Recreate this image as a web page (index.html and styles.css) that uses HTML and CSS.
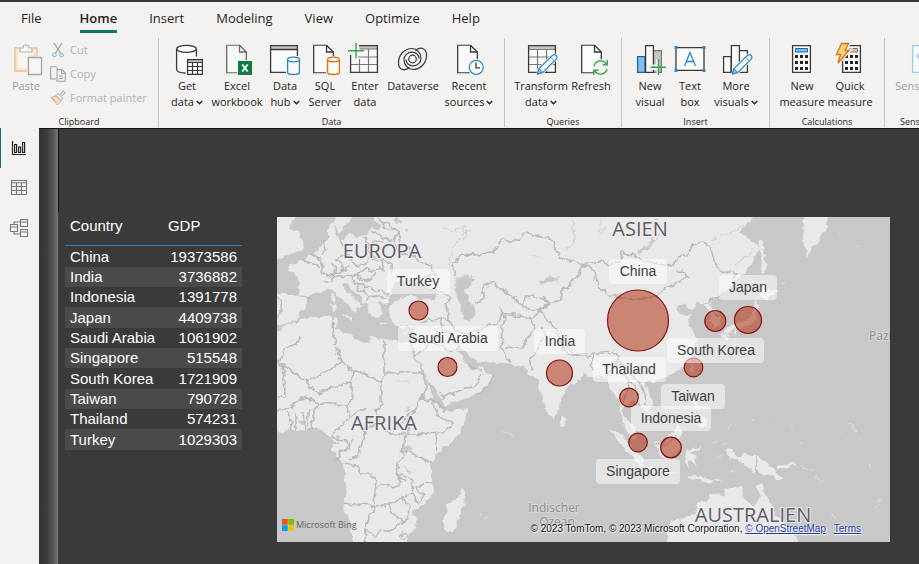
FILE: index.html
```html
<!DOCTYPE html>
<html lang="en">
<head>
<meta charset="utf-8">
<title>Report</title>
<meta name="viewport" content="width=device-width, initial-scale=1">
<link rel="stylesheet" href="styles.css">
</head>
<body>
<svg class="defs" aria-hidden="true">
  <symbol id="chev" viewBox="0 0 7 5"><path d="M.7 1 3.5 3.7 6.3 1" fill="none" stroke="#252423" stroke-width="1.4"/></symbol>
  <symbol id="doc" viewBox="0 0 21 29"><path d="M.7.7H13.500L20.300 7.500V28.300H.7Z" fill="#fafafa" stroke="#3b3a39" stroke-width="1.3"/><path d="M13.500.7V7.500H20.300" fill="none" stroke="#3b3a39" stroke-width="1.3"/></symbol>
  <symbol id="pencil" viewBox="0 0 22 22"><path d="M1 21 2.500 15.500 16.500 1.800Q18.300.4 20 2T20.300 5.500L6.500 19.300Z" fill="#fafafa" stroke="#f3f2f1" stroke-width="3"/><path d="M1 21 2.500 15.500 16.500 1.800Q18.300.4 20 2T20.300 5.500L6.500 19.300Z" fill="#fafafa" stroke="#2b88c8" stroke-width="1.2"/><path d="M1 21 2.500 15.500 6.500 19.300Z" fill="#83beec" stroke="#2b88c8"/><path d="m14.500 3.800 3.800 3.800" stroke="#2b88c8"/></symbol>
</svg>

<header>
  <nav class="tabs" aria-label="Ribbon tabs">
    <a href="#">File</a><a href="#" class="current" aria-current="page">Home</a><a href="#">Insert</a><a href="#">Modeling</a><a href="#">View</a><a href="#">Optimize</a><a href="#">Help</a>
  </nav>
  <div class="ribbon">
    <section class="group clipboard">
      <div class="tools">
        <button class="tool w-36 off" disabled>
          <svg class="ico" viewBox="0 0 34 34"><path d="M10 6H6V29H18M24 6H28V14" fill="none" stroke="#edc08e" stroke-width="1.400"/><path d="M8 8H26V14H19V27H8Z" fill="#f7f6f5" stroke="#f8e3bd" stroke-width="1.500"/><path d="M11 10V6H14Q14 3 17 3T20 6H23V10Z" fill="#f7f6f5" stroke="#b5b3b1" stroke-width="1.200"/><path d="M19.500 15.500H32.500V32.500H19.500Z" fill="#f7f6f5" stroke="#a5a3a1" stroke-width="1.300"/></svg>
          <span>Paste</span>
        </button>
        <div class="stack">
          <button class="row off" disabled><svg viewBox="0 0 16 16"><path d="M4 1 10.500 11M12 1 5.500 11" fill="none" stroke="#a3a1a0" stroke-width="1.300"/><circle cx="4.500" cy="13" r="1.900" fill="#d5e9f5" stroke="#88b9dc"/><circle cx="11.500" cy="13" r="1.900" fill="#d5e9f5" stroke="#88b9dc"/></svg>Cut</button>
          <button class="row off" disabled><svg viewBox="0 0 16 16"><path d="M6 13H.7V.7H6L8 3M7 3.500H12L15.300 7V15.300H7ZM11.500 3.500V7.500H15.300M9 10H13M9 12.500H13" fill="none" stroke="#a3a1a0" stroke-width="1.100"/></svg>Copy</button>
          <button class="row off" disabled><svg viewBox="0 0 16 16"><path d="M1 7.500 6 6 11 10.500 7.500 15Z" fill="#f9dfc6" stroke="#e0ad82"/><path d="M1.500 7.500 7 12" stroke="#e0ad82"/><path d="M6 5.500 8 3.500 10 5.500 13 .8 15.300 3 11 6.500 12.800 8.500 11 10.500Z" fill="#f7f6f5" stroke="#a3a1a0"/></svg>Format painter</button>
        </div>
      </div>
      <h2>Clipboard</h2>
    </section>

    <section class="group data">
      <div class="tools">
        <button class="tool w-44">
          <svg class="ico" viewBox="0 0 34 34"><path d="M6.600 7V27.500Q7 31 16 31V16H26.400V7" fill="#fafafa"/><ellipse cx="16.500" cy="6.800" rx="9.900" ry="3.500" fill="#fafafa" stroke="#3b3a39" stroke-width="1.300"/><path d="M6.600 7V27.500Q7 30.800 15.500 31M26.400 7V14.500" fill="none" stroke="#3b3a39" stroke-width="1.300"/><path d="M17.600 17.600H32.400V32.400H17.600Z" fill="#fafafa"/><path d="M17.600 17.600H32.400V20.500H17.600Z" fill="#c8c6c4"/><path d="M17.600 20.500H32.400M17.600 24.500H32.400M17.600 28.500H32.400M22.500 20.500V32.400M27.500 20.500V32.400M17.600 17.600H32.400V32.400H17.600Z" fill="none" stroke="#3b3a39" stroke-width="1.200"/></svg>
          <span>Get<br>data<svg class="chev"><use href="#chev"/></svg></span>
        </button>
        <button class="tool w-56">
          <svg class="ico" viewBox="0 0 34 34"><use href="#doc" x="6" y="2.500" width="21" height="29" opacity=".75"/><path d="M17 18H33V34H17Z" fill="#f3f2f1"/><path d="M18 19H32V33H18Z" fill="#107c41"/><path d="m22.300 22.500 5.400 7M27.700 22.500 22.300 29.500" stroke="#fff" stroke-width="1.900"/></svg>
          <span>Excel<br>workbook</span>
        </button>
        <button class="tool w-40">
          <svg class="ico" viewBox="0 0 34 34"><path d="M2.600 3.600H29.400V30.400H2.600Z" fill="#fafafa"/><path d="M2.600 3.600H29.400V7.500H2.600Z" fill="#c8c6c4"/><path d="M2.600 7.500H29.400M2.600 3.600H29.400V30.400H2.600Z" fill="none" stroke="#3b3a39" stroke-width="1.300"/><path d="M18 14H33V34H18Z" fill="#f3f2f1"/><path d="M19.600 17.500V30.500Q20 32.500 25.500 32.500T31.400 30.500V17.500" fill="#fafafa" stroke="#2b88c8" stroke-width="1.300"/><ellipse cx="25.500" cy="17.500" rx="5.900" ry="2.300" fill="#fafafa" stroke="#2b88c8" stroke-width="1.300"/></svg>
          <span>Data<br>hub<svg class="chev"><use href="#chev"/></svg></span>
        </button>
        <button class="tool w-40">
          <svg class="ico" viewBox="0 0 34 34"><use href="#doc" x="5" y="2.500" width="21" height="29"/><path d="M18 14H33V34H18Z" fill="#f3f2f1"/><path d="M19.600 17.500V30.500Q20 32.500 25.500 32.500T31.400 30.500V17.500" fill="#fafafa" stroke="#d9710f" stroke-width="1.300"/><ellipse cx="25.500" cy="17.500" rx="5.900" ry="2.300" fill="#fafafa" stroke="#d9710f" stroke-width="1.300"/></svg>
          <span>SQL<br>Server</span>
        </button>
        <button class="tool w-40">
          <svg class="ico" viewBox="0 0 34 34"><path d="M2.600 3.600H29.400V30.400H2.600Z" fill="#fafafa"/><path d="M11 3.600H29.400V7H11Z" fill="#c8c6c4"/><path d="M12 7H29.400M10 15H29.400M2.600 22.500H29.400M11.500 17V30.400M20.500 7V30.400" fill="none" stroke="#797775" stroke-width="1.200"/><path d="M11 3.600H29.400V30.400H2.600V13" fill="none" stroke="#3b3a39" stroke-width="1.300"/><path d="M0 1H10V12H0Z" fill="#f3f2f1"/><path d="M8 1V16.500M0 8.700H16" stroke="#35a352" stroke-width="1.400"/></svg>
          <span>Enter<br>data</span>
        </button>
        <button class="tool w-56">
          <svg class="ico" viewBox="0 0 34 34" fill="none" stroke="#3b3a39" stroke-width="1.200"><path id="swirl" d="M13.500 25.500C8 30 2 27.500 2.500 20 3 12 9 6.500 16 6.500 21 6.500 25 11 25 16.500 25 20.500 21.500 23.800 17 23.800 13 23.800 10 21 10 17.500"/><use href="#swirl" transform="rotate(180 16.500 17)"/><circle cx="16.500" cy="17" r="3.800"/></svg>
          <span>Dataverse</span>
        </button>
        <button class="tool w-56">
          <svg class="ico" viewBox="0 0 34 34"><use href="#doc" x="5" y="2.500" width="21" height="29"/><circle cx="24.300" cy="25.300" r="8.500" fill="#f3f2f1"/><circle cx="24.300" cy="25.300" r="7" fill="#fafafa" stroke="#2b88c8" stroke-width="1.300"/><path d="M24 20.500V25.800H28" fill="none" stroke="#3b3a39" stroke-width="1.300"/></svg>
          <span>Recent<br>sources<svg class="chev"><use href="#chev"/></svg></span>
        </button>
      </div>
      <h2>Data</h2>
    </section>

    <section class="group queries">
      <div class="tools">
        <button class="tool w-56">
          <svg class="ico" viewBox="0 0 34 34"><path d="M4.600 3.600H31.400V30.400H4.600Z" fill="#fafafa"/><path d="M4.600 3.600H31.400V7H4.600Z" fill="#c8c6c4"/><path d="M4.600 7.500H31.400M4.600 15H31.400M4.600 22.500H31.400M13.500 7.500V30.400M22.500 7.500V30.400" stroke="#797775" stroke-width="1.200"/><path d="M4.600 3.600H31.400V30.400H4.600Z" fill="none" stroke="#3b3a39" stroke-width="1.300"/><use href="#pencil" x="12.500" y="11.500" width="21.500" height="21.500"/></svg>
          <span>Transform<br>data<svg class="chev"><use href="#chev"/></svg></span>
        </button>
        <button class="tool w-44">
          <svg class="ico" viewBox="0 0 34 34"><use href="#doc" x="7" y="2.500" width="21" height="29"/><circle cx="26.500" cy="25.500" r="8.300" fill="#f3f2f1"/><path d="M20 24A6.800 6.800 0 0 1 32.500 22.300M33.300 18V22.800H28.600M33 27A6.800 6.800 0 0 1 20.500 28.700M19.700 33V28.200H24.400" fill="none" stroke="#35a352" stroke-width="1.400"/></svg>
          <span>Refresh</span>
        </button>
      </div>
      <h2>Queries</h2>
    </section>

    <section class="group insert">
      <div class="tools">
        <button class="tool w-44">
          <svg class="ico" viewBox="0 0 34 34"><path d="M20.500 8.600H28.400V30.400H20.500Z" fill="#c8c6c4" stroke="#797775" stroke-width="1.200"/><path d="M4.600 14.600H12V30.400H4.600Z" fill="#83beec" stroke="#1067b0" stroke-width="1.300"/><path d="M12.600 3.600H20.400V30.400H12.600Z" fill="#fafafa" stroke="#3b3a39" stroke-width="1.300"/><path d="M17 23.500H24V17M24.500 33V27H17" stroke="#f3f2f1" stroke-width="2" fill="none"/><path d="M25.500 17V33M17.500 25.300H33" stroke="#35a352" stroke-width="1.400"/></svg>
          <span>New<br>visual</span>
        </button>
        <button class="tool w-36">
          <svg class="ico" viewBox="0 0 34 34"><path d="M3 5.600H31V28.400H3Z" fill="#fafafa" stroke="#3b3a39" stroke-width="1.300"/><path d="M1.500 4H4.500V7H1.500ZM29.500 4H32.500V7H29.500ZM1.500 27H4.500V30H1.500ZM29.500 27H32.500V30H29.500Z" fill="#2b88d8"/><path d="M11.500 24 17 10.500 22.500 24M13.500 19.500H20.500" fill="none" stroke="#2b88d8" stroke-width="1.300"/></svg>
          <span>Text<br>box</span>
        </button>
        <button class="tool w-56">
          <svg class="ico" viewBox="0 0 34 34"><path d="M4.600 14.600H12V30.400H4.600ZM20.400 8.600H28.400V30.400H20.400ZM12.400 3.600H20.400V30.400H12.400Z" fill="#fafafa" stroke="#3b3a39" stroke-width="1.300"/><use href="#pencil" x="12.500" y="11.500" width="21.500" height="21.500"/></svg>
          <span>More<br>visuals<svg class="chev"><use href="#chev"/></svg></span>
        </button>
      </div>
      <h2>Insert</h2>
    </section>

    <section class="group calc">
      <div class="tools">
        <button class="tool w-48">
          <svg class="ico" viewBox="0 0 34 34"><path d="M7.600 3.600H25.400V30.400H7.600Z" fill="#fafafa" stroke="#3b3a39" stroke-width="1.300"/><path d="M10.500 6.500H22.500V10H10.500Z" fill="#83beec" stroke="#1067b0"/><path d="M10 14.500H23M10 20.500H23M10 26.500H23" stroke="#252423" stroke-width="3" stroke-dasharray="3 2"/></svg>
          <span>New<br>measure</span>
        </button>
        <button class="tool w-48">
          <svg class="ico" viewBox="0 0 34 34"><path d="M9.600 3.600H27.400V30.400H9.600Z" fill="#fafafa" stroke="#3b3a39" stroke-width="1.300"/><path d="M16 6.500H24.500V10H15Z" fill="#c8c6c4" stroke="#797775"/><path d="M12 14.500H25M12 20.500H25M12 26.500H25" stroke="#252423" stroke-width="3" stroke-dasharray="3 2"/><path d="M8.500 1.500H15.500L12 8.500H16L5 21 7.500 12.500H3.500Z" fill="#fcd67e" stroke="#f3f2f1" stroke-width="4"/><path d="M8.500 1.500H15.500L12 8.500H16L5 21 7.500 12.500H3.500Z" fill="#fcd67e" stroke="#d9710f" stroke-width="1.300"/></svg>
          <span>Quick<br>measure</span>
        </button>
      </div>
      <h2>Calculations</h2>
    </section>

    <section class="group sens">
      <div class="tools">
        <button class="tool w-56 off" disabled>
          <svg class="ico" viewBox="0 0 34 34"><path d="M8.600 3.600H28V30.400H8.600Z" fill="#f7fafc" stroke="#a0cbe5" stroke-width="1.300"/><path d="m18 9-5 5 5 5M18 12v4" fill="none" stroke="#a0cbe5" stroke-width="1.300"/></svg>
          <span>Sensitivity<br><svg class="chev"><use href="#chev"/></svg></span>
        </button>
      </div>
      <h2>Sensitivity</h2>
    </section>
  </div>
</header>

<div class="work">
  <aside aria-label="Views">
    <button class="view active" aria-label="Report view"><svg viewBox="0 0 20 20" fill="none" stroke="#252423" stroke-width="1.200"><path d="M3.500 3V16.500H17M5.600 6.500H7.600V14.500H5.600ZM9.600 9H11.600V14.500H9.600ZM13.600 4.500H15.600V14.500H13.600Z"/></svg></button>
    <button class="view" aria-label="Data view"><svg viewBox="0 0 20 20" fill="none" stroke="#797775" stroke-width="1.100"><path d="M2.500 2.500H17.500V16.500H2.500ZM2.500 4.700H17.500M2.500 8.500H17.500M2.500 12.500H17.500M7.500 4.700V16.500M12.500 4.700V16.500"/></svg></button>
    <button class="view" aria-label="Model view"><svg viewBox="0 0 20 20" fill="none" stroke="#797775" stroke-width="1.100"><path d="M1.500 6.500H8.500V13.500H1.500ZM1.500 9H8.500M11.500 1.500H18.500V8.500H11.500ZM11.500 4H18.500M11.500 11.500H18.500V18.500H11.500ZM11.500 14H18.500M5 6.500V4H11.500M5 13.500V16H11.500"/></svg></button>
  </aside>
  <main>
    <table>
      <thead><tr><th>Country</th><th>GDP</th></tr></thead>
      <tbody>
        <tr><td>China</td><td>19373586</td></tr>
        <tr><td>India</td><td>3736882</td></tr>
        <tr><td>Indonesia</td><td>1391778</td></tr>
        <tr><td>Japan</td><td>4409738</td></tr>
        <tr><td>Saudi Arabia</td><td>1061902</td></tr>
        <tr><td>Singapore</td><td>515548</td></tr>
        <tr><td>South Korea</td><td>1721909</td></tr>
        <tr><td>Taiwan</td><td>790728</td></tr>
        <tr><td>Thailand</td><td>574231</td></tr>
        <tr><td>Turkey</td><td>1029303</td></tr>
      </tbody>
    </table>
    <figure class="map">
      <svg viewBox="277 217 613 325" role="img" aria-label="Map of GDP by country">
        <!-- Roughens coastlines and borders together so that they stay aligned -->
        <filter id="rough" filterUnits="userSpaceOnUse" x="267" y="207" width="633" height="345">
          <feTurbulence type="fractalNoise" baseFrequency=".13" numOctaves="3" seed="4"/>
          <feDisplacementMap in="SourceGraphic" scale="7" xChannelSelector="R" yChannelSelector="G"/>
        </filter>
        <g filter="url(#rough)">
        <g class="land">
          <path d="M267 207H296L294 217 291 224 289 229 297 231 300 237 304 241 303 247 298 252 290 254 284 257 267 260Z"/>
          <path d="M333 207H353L353 217 350 223 345 225 344 230 339 233 335 226Z"/>
          <path d="M267 294 284 293 292 295 299 294 300 286 298 277 294 272 288 269 290 264 298 265 299 259 306 260 310 255 317 252 321 247 325 240 328 238 328 231 330 224 334 222 335 231 337 237 343 239 350 235 358 237 366 236 369 231 372 226 378 230 380 224 373 220 378 207H753L753 217 749 223 742 229 738 235 746 235 750 240 756 243 758 249 755 257 752 264 746 272 738 280 733 283 728 289 720 293 714 298 709 304 715 309 721 316 721 325 714 328 712 321 708 311 704 305 698 302 694 308 688 308 684 303 677 308 683 315 692 314 688 320 693 330 696 340 696 350 690 360 681 368 670 375 660 378 655 383 649 380 643 385 649 393 653 401 652 408 646 413 643 409 639 402 633 401 629 408 624 406 622 413 628 420 633 427 637 438 632 437 626 430 622 420 620 410 618 400 612 392 608 381 601 376 594 378 585 374 580 379 574 384 566 388 562 396 560 405 558 414 553 420 548 413 544 403 541 393 538 380 534 378 527 374 528 369 520 366 510 364 498 363 489 362 483 363 476 360 470 357 465 350 459 345 456 348 461 354 464 361 468 367 475 370 482 366 486 373 493 375 488 384 482 391 470 397 456 402 444 407 441 400 436 390 430 382 423 370 415 354 412 348 416 340 414 330 408 327 400 328 393 322 389 313 391 306 397 301 404 297 413 296 425 300 436 299 438 294 428 286 420 284 411 285 402 280 394 286 390 294 391 301 385 304 377 302 379 308 382 314 378 318 372 316 369 309 364 303 358 296 351 289 346 283 341 284 345 290 352 296 360 302 363 307 358 307 355 315 352 308 345 303 338 297 334 290 327 289 321 293 313 293 307 299 306 305 301 311 298 318 292 322 285 324 267 321Z"/>
          <path d="M267 335 283 328 286 325 294 323 302 320 312 317 324 317 336 316 338 320 336 327 341 332 351 336 360 341 367 344 371 337 383 338 394 341 403 342 411 342 411 350 415 360 420 370 427 381 431 393 438 405 442 412 453 412 467 409 467 417 462 428 457 437 446 446 437 453 431 463 431 474 434 485 433 495 426 502 417 508 412 514 417 521 416 528 408 533V552H353V542L350 525 346 512 342 503 347 492 345 479 343 465 337 456 332 449 334 438 325 433 318 426 308 429 298 431 290 429 283 433 267 431Z"/>
          <path d="m463 489 2 9-4 12-5 17-4 5h-6l-3-11 4-10v-7l8-4Z"/>
          <path d="m562 416 4 5-1 5-4 1-1-5ZM805 207H828L828 217 827 228 822 233 819 240 812 247 808 258 804 248 803 236ZM760 238 763 243 764 255 767 264 764 274 761 270 762 257 758 247ZM762 283 770 289 779 291 773 295 765 300 760 295ZM757 299 760 307 757 317 750 325 741 328 732 329 727 334 724 331 735 324 747 320 754 311ZM724 333 728 335 726 342 722 338ZM733 331 738 330 736 334ZM691 365 694 362 693 374 689 371Z"/>
          <path d="M655 442 662 443 670 434 678 426 684 431 680 438 681 447 676 454 671 459 659 454ZM610 428 618 433 627 441 638 453 644 460 643 466 635 461 622 445ZM646 467 658 469 669 471 680 475 666 474 650 471ZM687 449 700 447 700 450 690 452 697 457 693 459 698 468 693 464 690 459 689 468 686 464ZM687 476 699 476 711 480 724 481 708 483 690 479ZM726 449 733 450 733 454 738 458 745 453 758 457 768 463 772 469 778 474 785 479 777 479 768 474 760 475 751 472 747 466 741 461 731 459 727 454ZM778 466 790 464 792 461 794 465 786 468 778 468ZM691 397 698 403 699 412 694 407ZM696 415 704 417 707 425 701 427 695 422 691 428ZM648 413 653 415 648 417Z"/>
          <path d="M670 552 667 531 670 523 678 519 689 517 696 510 698 503 707 501 710 494 718 493 723 497 725 490 731 487 740 487 742 495 747 502 755 506 759 498 758 487 761 482 765 495 771 502 775 515 784 522 791 528 797 542V552Z"/>
          <path d="m332 294 3 1-1 6-3-2ZM331 303l5 1-1 8-3-1ZM343 315l9 1-1 4-6-2ZM379 323l7 1v1h-6ZM402 332l6-2-3 4Z"/>
          <path class="specks" d="M838 234h2M857 245h2M785 281l-3 3M778 283l-4 2M838 383h1M845 398h1M753 420h1M773 419h1M791 427h1M851 423l5 8M728 428l3-5M800 442h1M860 440h2M846 439h1M800 466l12 6M815 476l8 6M869 464l4 5M875 508l4-5M873 502l9-2M831 514l6 5M502 430l12 8M480 515h2M488 452l1 1M722 446l5-2M712 443l5-1M714 457h10M730 472l5-2M484 518l2-2"/>
        </g>
        <g class="water">
          <path d="M457 278 466 275 474 279 470 287 465 292 468 300 474 305 476 314 470 322 463 318 461 308 458 298 454 286Z"/>
          <path d="M637 253 646 247 652 238 655 240 649 249 640 254ZM402 447 411 445 413 450 406 453ZM403 466l6 4 2 4-5-3ZM363 450l-3 5 1-5ZM411 411l-6 1 3-6ZM541 280l8-3 10 1-8 3-11 3ZM489 217l-5 1M298 420l2 5 6-1-2-5Z"/>
          <path d="M343 284 347 284 355 292 363 299 360 300 352 294ZM393 221l5-3 4 3-5 3ZM404 229h5l-2 3Z"/>
          <path class="rivers" d="m454 231 12-5-4 7 8-3-10 10-7 7-4 20m-6-40 9 5M573 220l2 18-8 14M597 232l8-4-6 9M644 225l15-6M744 225l-8 6-15 4M752 249l-10 12-5 4M660 233l-6 8-10 7M712 236l6 3M709 241l8-3M530 257h10M398 380l12 2M601 218v7M493 282l-6 6M560 277l-6 4 5 3M447 429l5 2"/>
        </g>
        <g class="borders">
          <path d="M302 259 311 264 323 266 321 272 326 277 334 274 336 267 332 263M311 253 319 259 323 266M328 238 324 241 326 250 321 255M340 238 345 250 349 260 356 265 363 266 370 256 369 246 365 237M334 274 344 270 350 266M324 282 331 280 333 276M330 278 342 275 351 277 358 273 367 268 375 271 383 269 382 261 370 259M344 270 341 264 337 259 345 256M351 277 354 284 359 283 365 286 364 292 369 295 366 302M359 283 357 290 364 292M365 286 374 290 389 294M369 295 378 298 387 298M358 273 361 279 369 281 376 273M372 231 382 238 394 240 398 233 390 224 382 222M372 241 383 242M394 240 395 248 402 254 414 255 420 262 431 266 435 275 424 276M370 256 380 258 392 263 392 275M378 217 385 228 398 231 402 244 418 251M277 297 283 302 279 317M299 295 311 299M420 323 430 320 441 319 449 321 449 313 445 304 452 297 442 292 430 290M449 321 455 331 469 335 482 328 496 324 504 313 518 316 532 318M437 331 432 342 415 356M432 342 452 351 459 347M441 319 444 330 455 342"/>
          <path d="M455 276 452 265 462 254 477 255 492 252 503 240 518 240 525 233 533 236 548 238 556 247 563 260 574 261 584 266 592 263 604 261 608 266 620 262 621 252 638 257 645 262 660 264 673 265 678 258 688 254 693 244 704 242 710 247 714 261 721 271 736 273 733 281"/>
          <path d="M584 266 577 277 571 284 561 291 561 301 548 304 540 310 548 322 558 328M584 266 594 270 596 283 606 294 614 296 626 299 641 299 656 296 666 288 676 283 688 277 683 270 676 271M483 299 483 285 493 282 506 292 516 300 530 310 544 309 549 303 541 296 526 298 523 308M483 299 475 303M500 307 505 316 502 334 501 348 510 363M505 347 522 348 528 338 534 330 532 319 540 311M540 327 545 334 539 347 529 359 533 371M558 328 560 343 568 354 586 358 592 353 604 353 613 351 618 359 611 373M566 345 576 355 587 354M592 355 593 371M604 380 612 368 618 357 621 373 629 380 637 389 638 397M629 380 626 394 622 405M618 359 629 373 642 370 650 373M629 373 638 380 645 395 646 404M704 305 714 297 722 294M714 313 721 317M757 456 757 475M655 445 666 444 676 435M494 375 486 389 478 394M468 365 481 370M443 397 460 390 476 386 482 372M440 392 443 399"/>
          <path d="M333 317 334 337 340 362 336 367 306 382 277 360M300 336 299 342 284 350 281 361M283 362 285 396 277 396M306 382 318 393 351 382 353 370 340 362M353 370 381 382M384 339 384 375M384 373 424 373M384 375 381 382 381 403 376 411 380 422 389 434 407 434M351 382 353 398 348 405 317 403 313 416 312 429M348 405 350 417 340 425 332 437M294 402 306 398 318 402M277 411 291 409 294 402M303 412 304 430M296 413 296 430M308 410 308 426M286 413 293 422 290 431M423 373 427 384 422 398 415 411 406 416 401 425M415 411 408 421 408 433 428 434 443 433 453 423 438 416 433 400M422 399 434 400 443 410M380 422 365 430 363 440 359 453 350 461M407 434 403 444 402 457 398 465 399 477 405 483M437 435 435 451M404 451 421 457 432 463M352 417 357 410 366 410M332 437 346 440 349 448 341 452 335 460M343 464 357 466 361 473 372 473 376 480 375 491 382 484 393 487 401 483 397 475 406 477 414 480 411 493 418 503 424 496 416 486 434 481M342 503 356 505 375 506 388 506 400 498 411 495M375 506 374 512 368 516 367 531 374 536 382 530 389 532 397 525 408 520 410 507 402 498M388 506 394 515 403 521M367 531 364 542M375 491 373 504M402 533l4 1 1 3-4 2-3-3ZM332 442H339M353 438 347 448"/>
        </g>
        </g>
        <g class="places">
          <text x="382" y="258">EUROPA</text>
          <text x="640" y="236">ASIEN</text>
          <text x="384" y="430">AFRIKA</text>
          <text x="753" y="522">AUSTRALIEN</text>
        </g>
        <g class="seas">
          <text x="554" y="512">Indischer</text>
          <text x="557" y="526">Ozean</text>
          <text x="887" y="340">Pazifik</text>
        </g>
        <g class="bubbles">
          <circle cx="418.500" cy="310.500" r="9.500"/><circle cx="447.500" cy="367" r="9.500"/><circle cx="559.500" cy="373" r="13"/><circle cx="638" cy="320.500" r="30.500"/><circle cx="715.300" cy="321" r="10.500"/><circle cx="748" cy="320" r="13.500"/><circle cx="693.500" cy="367.500" r="9.300"/><circle cx="629" cy="397.500" r="9.300"/><circle cx="638" cy="442.500" r="9.300"/><circle cx="671" cy="447.500" r="10.300"/>
        </g>
        <g class="plates">
          <rect x="387" y="269" width="63" height="25" rx="4"/><rect x="398" y="326" width="100" height="25" rx="4"/><rect x="609" y="259" width="58" height="25" rx="4"/><rect x="534" y="329" width="51" height="25" rx="4"/><rect x="593" y="357" width="73" height="25" rx="4"/><rect x="667" y="338" width="97" height="25" rx="4"/><rect x="719" y="275" width="58" height="25" rx="4"/><rect x="661" y="384" width="64" height="25" rx="4"/><rect x="631" y="406" width="80" height="25" rx="4"/><rect x="596" y="459" width="84" height="25" rx="4"/>
        </g>
        <g class="names">
          <text x="418" y="286">Turkey</text><text x="448" y="343">Saudi Arabia</text><text x="638" y="276">China</text><text x="560" y="346">India</text><text x="629" y="374">Thailand</text><text x="716" y="355">South Korea</text><text x="748" y="292">Japan</text><text x="693" y="401">Taiwan</text><text x="671" y="423">Indonesia</text><text x="638" y="476">Singapore</text>
        </g>
      </svg>
      <div class="bing"><svg viewBox="0 0 12 12"><path d="M0 0H5.700V5.700H0Z" fill="#f65314"/><path d="M6.300 0H12V5.700H6.300Z" fill="#7cbb00"/><path d="M0 6.300H5.700V12H0Z" fill="#00a1f1"/><path d="M6.300 6.300H12V12H6.300Z" fill="#ffbb00"/></svg>Microsoft Bing</div>
      <figcaption>© 2023 TomTom, © 2023 Microsoft Corporation, <a href="#">© OpenStreetMap</a> <a href="#" class="terms">Terms</a></figcaption>
    </figure>
  </main>
</div>
</body>
</html>
```
FILE: styles.css
```css
* { box-sizing: border-box; }

body {
  margin: 0;
  min-height: 100vh;
  display: flex;
  flex-direction: column;
  overflow-x: hidden;
  background: #3a3a3a;
  color: #252423;
  font: 11px/16px "Open Sans", "Noto Sans", sans-serif;
}

button {
  margin: 0;
  padding: 0;
  border: 0;
  background: none;
  color: inherit;
  font: inherit;
}

.defs { position: absolute; width: 0; height: 0; }

/* Ribbon */
header { border-top: 2px solid #3b3a39; background: #f3f2f1; }

.tabs { display: flex; height: 36px; padding-left: 5px; }
.tabs a {
  display: flex;
  flex-direction: column;
  margin: 0 16px;
  padding-top: 6px;
  color: #252423;
  font-size: 13px;
  line-height: 20px;
  text-decoration: none;
}
.tabs .current { margin-left: 22px; font-weight: 600; }
.tabs .current::after { content: ""; margin-top: 2px; border-top: 3px solid #117865; }

.ribbon { display: flex; height: 90px; overflow: hidden; }
.group {
  display: flex;
  flex: none;
  flex-direction: column;
  justify-content: space-between;
  height: 89px;
  border-right: 1px solid #c8c6c4;
}
.group h2 {
  margin: 0;
  font-size: 9px;
  font-weight: 400;
  line-height: 11px;
  text-align: center;
}
.tools { display: flex; padding: 4px 8px 0; }
.clipboard { width: 159px; }
.data { width: 346px; }
.data .tools, .insert .tools { padding-left: 6px; }
.queries { width: 117px; }
.insert { width: 148px; }
.calc { width: 115px; }
.sens { width: 72px; border-right: 0; }

.tool {
  display: flex;
  flex: none;
  flex-direction: column;
  align-items: center;
  white-space: nowrap;
}
.ico { width: 34px; height: 34px; margin-bottom: 2px; }
.chev { width: 7px; height: 5px; margin-left: 2px; vertical-align: 1px; }
.w-36 { width: 36px; }
.w-40 { width: 40px; }
.w-44 { width: 44px; }
.w-48 { width: 48px; }
.w-56 { width: 56px; }
.off { color: #a19f9d; }

.stack { margin: -4px 0 0 6px; }
.row {
  display: flex;
  align-items: center;
  gap: 4px;
  height: 24px;
  color: #b3b1af;
  white-space: nowrap;
}
.row svg { width: 16px; height: 16px; }

/* Workspace */
.work { display: flex; flex: 1; }
aside { width: 39px; background: #f3f2f1; }
.view { display: grid; place-items: center; width: 38px; height: 40px; }
.view svg { width: 20px; height: 20px; }
.active { box-shadow: inset 1px 0 #117865; }

main {
  display: flex;
  flex: 1;
  align-items: flex-start;
  gap: 35px;
  min-width: 0;
  padding: 82px 29px 22px 26px;
  border-top: 1px solid #111;
  background:
    linear-gradient(#111, #111) 19px 0 / 1px 83px no-repeat,
    linear-gradient(90deg, #333 0, #3d3d3d 8px, #555 14px, #777 19px, #3a3a3a 19px);
}

table {
  flex: none;
  width: 177px;
  border-collapse: separate;
  border-spacing: 0;
  color: #fff;
  font: 15px/20px "Liberation Sans", Arial, sans-serif;
}
th { padding: 5px 5px 9px; border-bottom: 1px solid #2b7cc0; font-weight: 400; text-align: left; }
td { height: 20px; padding: 0 5px; }
td + td { text-align: right; }
tbody tr:nth-child(3n + 1) td { height: 21px; }
tbody tr:nth-child(even) { background: #4a4a4a; }

.map { position: relative; flex: 1; min-width: 0; margin: 6px 0 0; background: #c8c8c8; }
.map > svg { display: block; width: 100%; overflow: hidden; }
.land { fill: #e9e9e9; }
.specks { fill: none; stroke: #dedede; }
.water { fill: #c8c8c8; }
.rivers { fill: none; stroke: #d2d2d2; stroke-width: 1.2; }
.borders { fill: none; stroke: #beb9b9; stroke-width: 1.6; stroke-linejoin: round; }
.map text { text-anchor: middle; }
.places, .seas { font-family: "Open Sans", "Noto Sans", sans-serif; paint-order: stroke; stroke: #ededed; stroke-width: 2; }
.places { fill: #5f5c69; font-size: 20px; }
.seas { fill: #8c8c8c; font-size: 12px; stroke: #d6d6d6; }
.bubbles { fill: rgba(174, 34, 0, .5); stroke: #861414; stroke-width: 1.2; }
.plates { fill: rgba(255, 255, 255, .5); }
.names { fill: #404040; font: 14px "Liberation Sans", Arial, sans-serif; }

.bing {
  position: absolute;
  left: 5px;
  bottom: 9px;
  display: flex;
  align-items: center;
  gap: 2px;
  color: #666;
  font-size: 9px;
}
.bing svg { width: 12px; height: 12px; }
figcaption {
  position: absolute;
  right: 29px;
  bottom: 7px;
  color: #111;
  font: 10px/12px "Liberation Sans", Arial, sans-serif;
  text-shadow: 1px 1px 1px #fff, 0 0 2px #fff;
  white-space: nowrap;
}
figcaption a { color: #1b3a9e; }
.terms { margin-left: 5px; }
```
